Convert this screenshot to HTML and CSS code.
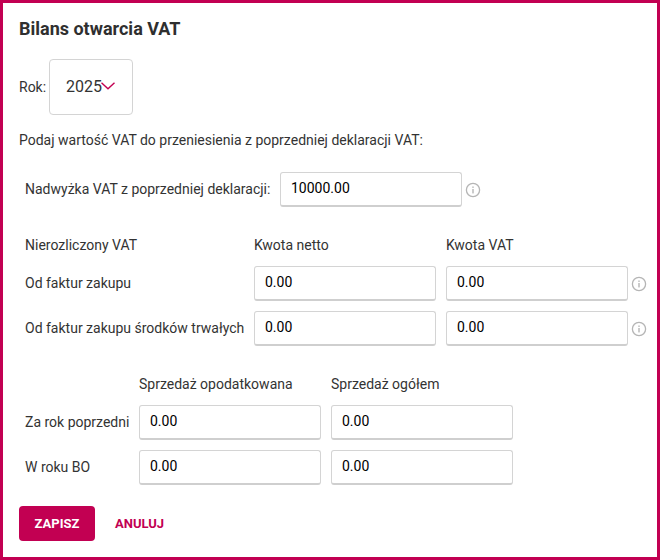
FILE: index.html
```html
<!DOCTYPE html>
<html lang="pl">
	<head>
		<meta charset="utf-8">
		<title>Bilans otwarcia VAT</title>
		<link rel="stylesheet" href="styles.css">
	</head>
	<body>
		<div class="dialog">
			<h2 class="title">Bilans otwarcia VAT</h2>
			<div class="year-row">
				<label>Rok:</label>
				<div class="year-select">
					<span>2025</span>
					<svg class="chevron" width="14" height="8" viewBox="0 0 14 8"><path d="M0.5 0.8 L7 6.8 L13.5 0.8" fill="none" stroke="#c20052" stroke-width="1.4"/></svg>
				</div>
			</div>
			<p class="lead">Podaj wartość VAT do przeniesienia z poprzedniej deklaracji VAT:</p>

			<div class="row surplus-row">
				<label class="surplus-label">Nadwyżka VAT z poprzedniej deklaracji:</label>
				<input class="field" value="10000.00">
				<svg class="info" width="16" height="16" viewBox="0 0 16 16"><circle cx="8" cy="8" r="6.6" fill="none" stroke="#b5b5b5" stroke-width="1.3"/><rect x="7.3" y="7" width="1.4" height="4.4" fill="#b5b5b5"/><rect x="7.3" y="4.5" width="1.4" height="1.4" fill="#b5b5b5"/></svg>
			</div>

			<div class="row head-row">
				<span class="col-label">Nierozliczony VAT</span>
				<span class="col-head">Kwota netto</span>
				<span class="col-head">Kwota VAT</span>
			</div>
			<div class="row input-row">
				<label class="col-label">Od faktur zakupu</label>
				<input class="field" value="0.00">
				<input class="field" value="0.00">
				<svg class="info" width="16" height="16" viewBox="0 0 16 16"><circle cx="8" cy="8" r="6.6" fill="none" stroke="#b5b5b5" stroke-width="1.3"/><rect x="7.3" y="7" width="1.4" height="4.4" fill="#b5b5b5"/><rect x="7.3" y="4.5" width="1.4" height="1.4" fill="#b5b5b5"/></svg>
			</div>
			<div class="row input-row">
				<label class="col-label">Od faktur zakupu środków trwałych</label>
				<input class="field" value="0.00">
				<input class="field" value="0.00">
				<svg class="info" width="16" height="16" viewBox="0 0 16 16"><circle cx="8" cy="8" r="6.6" fill="none" stroke="#b5b5b5" stroke-width="1.3"/><rect x="7.3" y="7" width="1.4" height="4.4" fill="#b5b5b5"/><rect x="7.3" y="4.5" width="1.4" height="1.4" fill="#b5b5b5"/></svg>
			</div>

			<div class="row head-row sales-head">
				<span class="sales-label"></span>
				<span class="col-head">Sprzedaż opodatkowana</span>
				<span class="col-head">Sprzedaż ogółem</span>
			</div>
			<div class="row input-row">
				<label class="sales-label">Za rok poprzedni</label>
				<input class="field" value="0.00">
				<input class="field" value="0.00">
			</div>
			<div class="row input-row">
				<label class="sales-label">W roku BO</label>
				<input class="field" value="0.00">
				<input class="field" value="0.00">
			</div>

			<div class="actions">
				<button class="btn-save">ZAPISZ</button>
				<button class="btn-cancel">ANULUJ</button>
			</div>
		</div>
	</body>
</html>
```

FILE: styles.css
```css
html, body {
	margin: 0;
	padding: 0;
}
body {
	width: 660px;
	height: 560px;
	overflow: hidden;
	background-color: #fff;
	font-family: Roboto, sans-serif;
	font-size: 14px;
	color: #333;
}
.dialog {
	box-sizing: border-box;
	width: 660px;
	height: 560px;
	border: 3px solid #c20052;
	padding: 15px 0 0 16px;
}
.title {
	margin: 0;
	font-size: 18px;
	line-height: 21px;
	font-weight: 700;
	color: #2f2f2f;
}
.year-row {
	display: flex;
	align-items: center;
	gap: 3px;
	margin-top: 20px;
}
.year-select {
	box-sizing: border-box;
	display: flex;
	align-items: center;
	width: 84px;
	height: 56px;
	padding: 0 16px 2px 16px;
	border: 1px solid #d4d4d4;
	border-radius: 4px;
	font-size: 16px;
}
.chevron {
	flex: none;
	margin-left: -1px;
}
.lead {
	margin: 17px 0 0 0;
	line-height: 17px;
}
.row {
	display: flex;
	align-items: center;
	padding-left: 6px;
}
.row > * {
	flex: none;
}
.row > label {
	padding-bottom: 2px;
}
.surplus-row {
	margin-top: 23px;
}
.surplus-label {
	width: 255px;
}
.field {
	box-sizing: border-box;
	width: 182px;
	height: 35px;
	padding: 0 10px 2px 10px;
	border: 1px solid #d4d4d4;
	border-bottom: 2px solid #cfcfcf;
	border-radius: 3px;
	outline: none;
	background: #fff;
	font-family: Roboto, sans-serif;
	font-size: 14px;
	color: #000;
}
.field + .field {
	margin-left: 10px;
}
.info {
	margin-left: 3px;
}
.head-row {
	margin-top: 21px;
	height: 35px;
	line-height: 35px;
}
.col-label {
	width: 229px;
	white-space: nowrap;
}
.col-head {
	width: 192px;
}
.input-row {
	margin-top: 10px;
}
.head-row + .input-row {
	margin-top: 3px;
}
.sales-label {
	width: 114px;
	white-space: nowrap;
}
.actions {
	display: flex;
	align-items: center;
	margin-top: 21px;
}
.btn-save {
	width: 76px;
	height: 35px;
	border: none;
	border-radius: 4px;
	background-color: #c20052;
	color: #fff;
	font-family: Roboto, sans-serif;
	font-size: 13px;
	font-weight: 700;
	cursor: pointer;
}
.btn-cancel {
	margin-left: 20px;
	padding: 0;
	border: none;
	background: none;
	color: #c20052;
	font-family: Roboto, sans-serif;
	font-size: 13px;
	font-weight: 700;
	cursor: pointer;
}
```
